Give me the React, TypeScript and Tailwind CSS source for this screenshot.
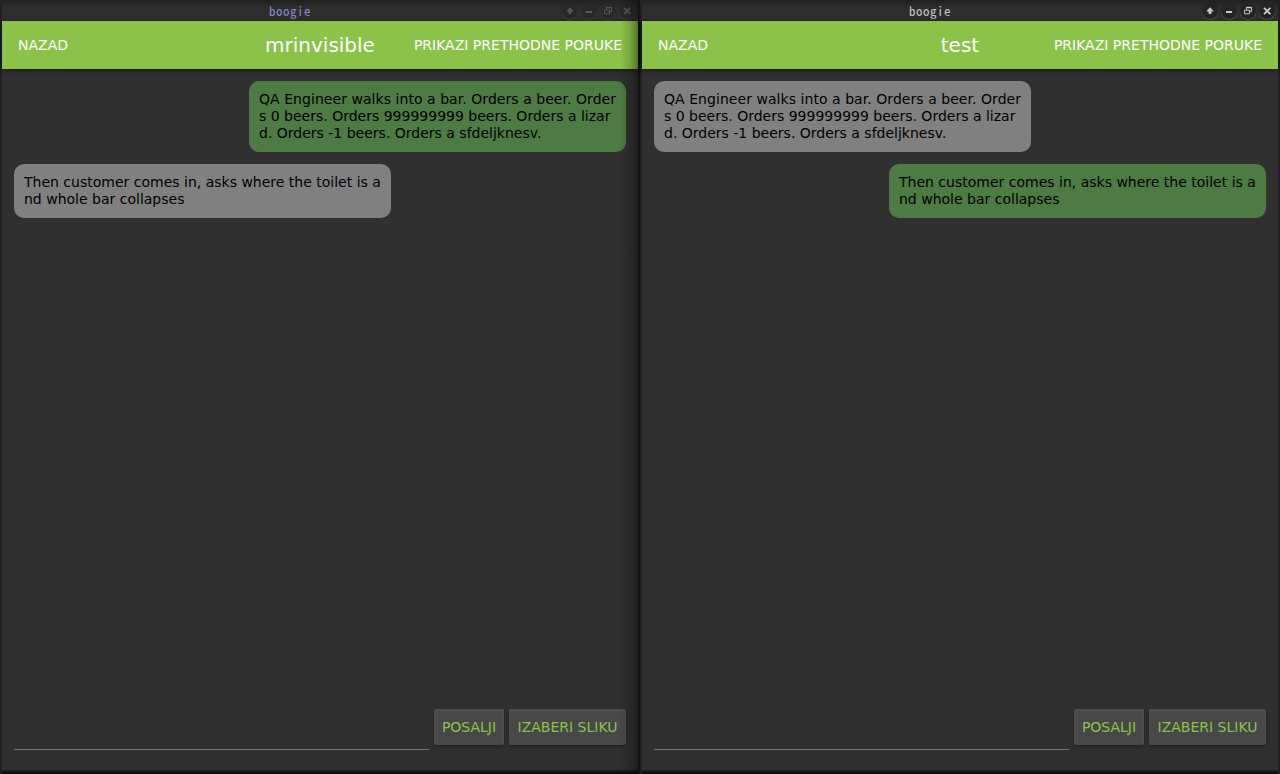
import React from "react";

type Message = { own: boolean; lines: string[] };
type ChatProps = { peer: string; active: boolean; messages: Message[] };

const JOKE = [
  "QA Engineer walks into a bar. Orders a beer. Order",
  "s 0 beers. Orders 999999999 beers. Orders a lizar",
  "d. Orders -1 beers. Orders a sfdeljknesv.",
];
const PUNCHLINE = [
  "Then customer comes in, asks where the toilet is a",
  "nd whole bar collapses",
];

function ControlIcon({ kind }: { kind: string }) {
  return (
    <svg width="16" height="16" viewBox="0 0 16 16" fill="none" stroke="currentColor">
      {kind === "up" && <path d="M8 4.2 L11.3 7.7 V8.6 H9.4 V11 H6.6 V8.6 H4.7 V7.7 Z" fill="currentColor" stroke="none" />}
      {kind === "min" && <path d="M5 9 H11" strokeWidth="2" />}
      {kind === "restore" && (
        <>
          <path d="M6.5 6.5 V4.3 H11.5 V8.5 H9.8" />
          <path d="M6.5 4.6 H11.5" strokeWidth="1.3" />
          <path d="M4.5 7.2 H9.5 V10.8 H4.5 Z" />
        </>
      )}
      {kind === "close" && <path d="M5 4.8 L11.4 11.2 M11.4 4.8 L5 11.2" strokeWidth="1.9" />}
    </svg>
  );
}

function TitleBar({ active }: { active: boolean }) {
  return (
    <div className="grid h-[21px] shrink-0 grid-cols-[267px_auto_1fr] bg-linear-to-b from-[#202020] via-[#2d2d2d] via-35% to-[#303030]">
      <div />
      <div
        className={`w-[44px] pt-[3px] font-['Noto_Sans_Mono_CJK_JP','Noto_Sans_Mono_CJK_SC','DejaVu_Sans_Mono',monospace] text-[13px] leading-[16px] tracking-[0.5px] whitespace-nowrap ${active ? "text-[#c4c4c4]" : "text-[#8b89cc]"}`}
      >
        boogie
      </div>
      <div className={`flex justify-end gap-[3px] pt-[3px] pr-[3px] ${active ? "text-[#c8c8c8]" : "text-[#565656]"}`}>
        {["up", "min", "restore", "close"].map((kind) => (
          <div
            key={kind}
            className={`size-4 rounded-full ${active ? "bg-[#242424] shadow-[0_1px_1px_#555555]" : "bg-[#292929] shadow-[0_1px_1px_#444444]"}`}
          >
            <ControlIcon kind={kind} />
          </div>
        ))}
      </div>
    </div>
  );
}

function ActionButton({ label, width }: { label: string; width: string }) {
  return (
    <button
      className={`${width} h-9 rounded-[2px] bg-[#484848] text-center whitespace-nowrap text-[#8bc34a] shadow-[0_1px_3px_rgba(0,0,0,0.45),inset_0_1px_4px_rgba(255,255,255,0.08)]`}
    >
      {label}
    </button>
  );
}

function ChatWindow({ peer, active, messages }: ChatProps) {
  return (
    <section className="relative flex h-full w-[640px] flex-col border-x-2 border-[#202020] bg-[#303030]">
      <TitleBar active={active} />
      <header className="z-1 grid h-12 shrink-0 grid-cols-[1fr_auto_1fr] items-center bg-[#8bc34a] px-4 text-white shadow-[0_1px_5px_rgba(0,0,0,0.6)]">
        <span className="leading-[18px]">NAZAD</span>
        <h1 className="text-[20px] leading-6">{peer}</h1>
        <span className="text-right leading-[18px] whitespace-nowrap">PRIKAZI PRETHODNE PORUKE</span>
      </header>
      <main className="flex min-h-0 flex-1 flex-col gap-3 p-3">
        {messages.map((message) => (
          <div
            key={message.lines[0]}
            className={`w-[377px] rounded-[10px] p-[10px] leading-[17px] whitespace-nowrap text-black ${message.own ? "self-end bg-[#4e7a43]" : "self-start bg-[#808080]"}`}
          >
            {message.lines.map((line) => (
              <p key={line} className={line === JOKE[0] ? "tracking-[0.05px]" : "tracking-normal"}>
                {line}
              </p>
            ))}
          </div>
        ))}
      </main>
      <footer className="flex h-[61px] shrink-0 items-start gap-[5px] px-3">
        <div className="h-[41px] flex-1 border-b border-[#747474]" />
        <ActionButton label="POSALJI" width="w-[70px]" />
        <ActionButton label="IZABERI SLIKU" width="w-[117px]" />
      </footer>
      <div className="h-1 shrink-0 bg-linear-to-b from-[#202020] to-[#0c0a0c]" />
      {!active && (
        <div className="pointer-events-none absolute inset-y-0 right-[-2px] z-2 w-5 bg-linear-to-r from-transparent via-black/15 via-50% to-black/45" />
      )}
    </section>
  );
}

export default function App() {
  return (
    <div className="flex h-[774px] w-[1280px] overflow-hidden bg-[#202020] font-['DejaVu_Sans',sans-serif] text-[14px] leading-[17px]">
      <ChatWindow
        peer="mrinvisible"
        active={false}
        messages={[
          { own: true, lines: JOKE },
          { own: false, lines: PUNCHLINE },
        ]}
      />
      <ChatWindow
        peer="test"
        active
        messages={[
          { own: false, lines: JOKE },
          { own: true, lines: PUNCHLINE },
        ]}
      />
    </div>
  );
}
